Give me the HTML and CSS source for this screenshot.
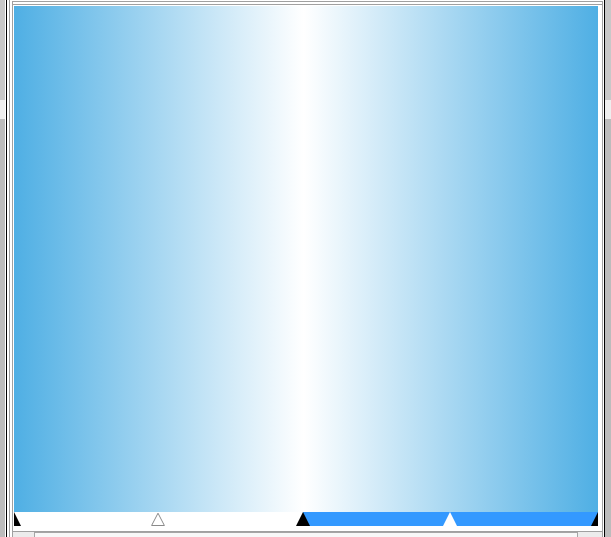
FILE: index.html
```html
<!DOCTYPE html>
<html>
<head>
<meta charset="utf-8">
<title>Gradient editor</title>
<link rel="stylesheet" href="styles.css">
</head>
<body>
<div class="app">
  <div class="scroll scroll-left"></div>
  <div class="rail rail-left"></div>
  <div class="panel">
    <div class="editor">
      <div class="preview"></div>
      <div class="stops">
        <svg class="stops-svg" width="584" height="19" viewBox="0 0 584 19">
          <rect x="289" y="0" width="295" height="14" fill="#3399ff"/>
          <polygon points="0,0 0,14 7,14" fill="#000"/>
          <polygon points="144,1.2 137.6,13.5 150.4,13.5" fill="#fff" stroke="#8a8a8a" stroke-width="1"/>
          <polygon points="289,0 282,14 296,14" fill="#000"/>
          <polygon points="436,0 429,14 443,14" fill="#fff"/>
          <polygon points="584,0 584,14 577,14" fill="#000"/>
        </svg>
      </div>
      <div class="footer"><div class="field"></div></div>
    </div>
  </div>
  <div class="rail rail-right"></div>
  <div class="scroll scroll-right"></div>
</div>
</body>
</html>
```
FILE: styles.css
```css
html, body {
  margin: 0;
  padding: 0;
  background: #ffffff;
  font-family: "Liberation Sans", Arial, sans-serif;
}

.app {
  display: flex;
  width: 611px;
  height: 537px;
  overflow: hidden;
  background: #ffffff;
}

.scroll {
  flex: none;
  background: linear-gradient(to bottom, #c8c8c8 0, #c8c8c8 100px, #eeeeee 100px, #eeeeee 119px, #bcbcbc 119px);
}

.scroll-left { width: 5px; }
.scroll-right { width: 6px; }

.rail {
  flex: none;
}

.rail-left {
  width: 2px;
  margin: 0 2px 0 1px;
  border-left: 1px solid #000000;
  border-right: 1px solid #a0a0a0;
}

.rail-right {
  width: 0;
  margin-left: 1px;
  border-left: 1px solid #000000;
}

.panel {
  flex: none;
  width: 589px;
  margin-top: 1px;
  padding: 2px 0 0 0;
  border: 1px solid #a0a0a0;
  border-bottom: none;
}

.editor {
  display: flex;
  flex-direction: column;
  border-top: 1px solid #a0a0a0;
  padding-top: 1px;
}

.preview {
  height: 506px;
  margin: 0 4px 0 1px;
  background: linear-gradient(to right, #4fafe4 0%, #ffffff 49.6%, #4fafe4 100%);
}

.stops {
  height: 19px;
  margin: 0 4px 0 1px;
  background: #ffffff;
}

.stops-svg {
  display: block;
}

.footer {
  border-top: 1px solid #a0a0a0;
  background: #ececec;
  height: 30px;
}

.field {
  height: 20px;
  margin: 0 24px 0 21px;
  border: 1px solid #a5a5a5;
  background: #f8f8f8;
}
```
